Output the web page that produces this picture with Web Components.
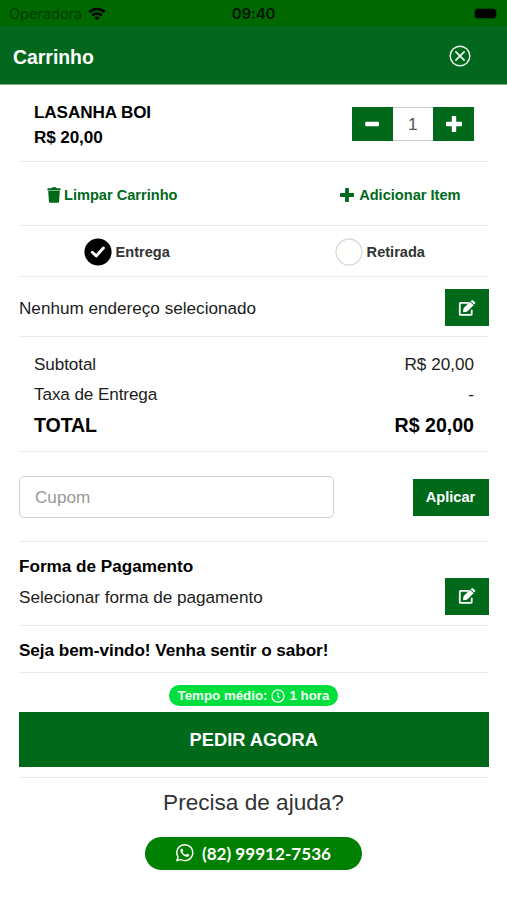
<!DOCTYPE html>
<html lang="pt-BR">
<head>
<meta charset="utf-8">
<title>Carrinho</title>
<style>
html,body{margin:0;padding:0;background:#fff}
body{font-family:"Liberation Sans",Arial,sans-serif;font-size:17.14px;color:#1c1c1c;--green:#00691a}
</style>
</head>
<body>
<cart-page></cart-page>
<script>
const define = (name, html) => {
  const t = document.createElement('template');
  t.innerHTML = html;
  customElements.define(name, class extends HTMLElement {
    constructor() {
      super();
      this.attachShadow({ mode: 'open' }).append(t.content.cloneNode(true));
    }
  });
};

const shapes = {
  wifi: ['0 0 18 14', '<path d="M1.3 5.2A11 11 0 0 1 16.7 5.2M4.2 8.3A7 7 0 0 1 13.8 8.3" fill="none" stroke="currentColor" stroke-width="2.5"/><path d="M6.4 10.4Q9 8.4 11.6 10.4L9 13.2Z"/>'],
  close: ['0 0 22 22', '<g fill="none" stroke="currentColor" stroke-width="1.5"><circle cx="11" cy="11" r="9.8"/><path d="M6.9 6.9l8.2 8.2M15.1 6.9l-8.2 8.2" stroke-width="1.8" stroke-linecap="round"/></g>'],
  minus: ['0 0 16 16', '<rect x="1.2" y="5.8" width="13.8" height="4.5" rx="1"/>'],
  plus: ['0 0 16 16', '<path d="M6.6 0h2.8q.8 0 .8.8v5h5q.8 0 .8.8v2.8q0 .8-.8.8h-5v5q0 .8-.8.8H6.6q-.8 0-.8-.8v-5h-5Q0 10.2 0 9.4V6.6q0-.8.8-.8h5v-5q0-.8.8-.8z"/>'],
  trash: ['0 0 14 16', '<path d="M.9 1.3h3.500L5 .2h4l.6 1.100h3.500q.5 0 .5.5v1.400H.4V1.800q0-.5.5-.5zM1.200 3.700h11.600l-.7 10.900q-.1 1.200-1.300 1.200H3.200Q2 15.800 1.900 14.600z"/>'],
  check: ['0 0 28 28', '<circle cx="14" cy="14" r="13.6"/><path d="M8.300 14.200l3.900 3.700 7.200-7.800" fill="none" stroke="#fff" stroke-width="2.900" stroke-linejoin="round" stroke-linecap="round"/>'],
  empty: ['0 0 28 28', '<circle cx="14" cy="14" r="13" fill="#fffffd" stroke="#d9d9d9" stroke-width="1.3"/>'],
  edit: ['0 0 18 16', '<path d="M10.800 2.900H2.400q-.6 0-.6.6v10.700q0 .6.6.6h10.700q.6 0 .6-.6V9.800" fill="none" stroke="currentColor" stroke-width="1.800"/><path d="M5 12.200l.5-4 6.600-6.400 3.500 3.500-6.600 6.400zM12.700 1.200l.7-.7q.9-.8 1.800 0l1.600 1.600q.9.900 0 1.800l-.7.700z"/>'],
  clock: ['0 0 14 14', '<circle cx="7" cy="7" r="6.1" fill="none" stroke="currentColor" stroke-width="1.3"/><path d="M6.900 3.200v4l2.300 1.700" fill="none" stroke="currentColor" stroke-width="1.3"/>'],
  whatsapp: ['0 32 448 448', '<path d="M380.900 97.100C339 55.100 283.200 32 223.900 32c-122.400 0-222 99.600-222 222 0 39.100 10.200 77.300 29.600 111L0 480l117.700-30.900c32.400 17.700 68.900 27 106.100 27h.1c122.300 0 224.100-99.600 224.100-222 0-59.300-25.200-115-67.100-157zm-157 341.600c-33.200 0-65.700-8.900-94-25.700l-6.700-4-69.800 18.300L72 359.200l-4.400-7c-18.500-29.400-28.200-63.300-28.200-98.200 0-101.700 82.800-184.500 184.600-184.500 49.300 0 95.600 19.200 130.400 54.100 34.800 34.900 56.200 81.200 56.100 130.500 0 101.800-84.900 184.600-186.600 184.600zm101.200-138.200c-5.500-2.800-32.800-16.200-37.900-18-5.100-1.900-8.800-2.800-12.500 2.800-3.700 5.600-14.300 18-17.600 21.800-3.200 3.700-6.500 4.200-12 1.400-32.600-16.300-54-29.100-75.500-66-5.700-9.800 5.700-9.100 16.300-30.300 1.800-3.700.9-6.900-.5-9.700-1.400-2.800-12.500-30.100-17.100-41.200-4.500-10.800-9.100-9.300-12.500-9.500-3.200-.2-6.900-.2-10.600-.2-3.700 0-9.700 1.400-14.800 6.900-5.100 5.600-19.400 19-19.400 46.300 0 27.300 19.900 53.700 22.600 57.400 2.800 3.700 39.100 59.700 94.800 83.800 35.200 15.200 49 16.500 66.600 13.900 10.700-1.600 32.800-13.400 37.400-26.400 4.600-13 4.600-24.100 3.200-26.400-1.300-2.500-5-3.900-10.500-6.600z"/>']
};
customElements.define('ui-icon', class extends HTMLElement {
  connectedCallback() {
    if (this.shadowRoot) return;
    const [box, body] = shapes[this.getAttribute('name')];
    this.attachShadow({ mode: 'open' }).innerHTML =
      `<style>:host{display:inline-flex;flex:none}svg{width:100%;height:100%;fill:currentColor}</style><svg viewBox="${box}">${body}</svg>`;
  }
});

define('status-bar', `<style>
:host{display:grid;grid-template-columns:1fr auto 1fr;align-items:center;height:26px;box-sizing:border-box;padding:1px 9px 0;background:#006800;font:14.5px Inter,sans-serif}
.l{display:flex;align-items:center;gap:6px;color:#003c00}
ui-icon{width:18px;height:14px;color:#000}
b{font-weight:600;font-size:15px;letter-spacing:-.1px;color:#001500}
.r{justify-self:end;width:21.5px;height:8.5px;background:#000;border:1.5px solid #004900;border-radius:4px;margin-right:1px}
</style><div class="l"><span>Operadora</span><ui-icon name="wifi"></ui-icon></div><b>09:40</b><div class="r"></div>`);

define('app-header', `<style>
:host{display:flex;align-items:center;justify-content:space-between;height:59px;box-sizing:border-box;padding:2px 36px 0 13px;background:#03681d;color:#fff;border-bottom:1px solid #7fb48c;font-weight:bold;font-size:19.4px}
span{padding-top:2px}
ui-icon{width:22px;height:22px;color:#e6f5e6}
</style><span><slot></slot></span><ui-icon name="close"></ui-icon>`);

define('cart-section', `<style>
:host{display:flex;align-items:center;justify-content:space-between;box-sizing:border-box;margin:0 18.5px 0 19px;border-bottom:1px solid #eaeaea}
</style><slot></slot>`);

define('green-button', `<style>
:host{display:flex;align-items:center;justify-content:center;background:var(--green);color:#fff;font-weight:bold;font-size:14.6px;width:76px;height:37px;flex:none}
:host([edit]){width:43.5px}
:host([big]){width:auto;height:55px;margin:0 18.5px 0 19px;font-size:18.3px}
</style><slot></slot>`);

define('qty-stepper', `<style>
:host{display:flex;height:34px;width:122.5px;color:#fff}
div{display:grid;place-items:center;width:41px;background:var(--green)}
.n{flex:1;box-sizing:border-box;background:#fff;color:#555;border:solid #ccc;border-width:1px 0}
ui-icon{width:16px;height:16px}
</style><div><ui-icon name="minus"></ui-icon></div><div class="n"><slot></slot></div><div><ui-icon name="plus"></ui-icon></div>`);

define('cart-link', `<style>
:host{display:flex;align-items:center;gap:3.5px;color:var(--green);font-weight:bold;font-size:14.6px}
</style><slot></slot>`);

define('delivery-option', `<style>
:host{display:flex;align-items:center;gap:3.5px;color:#333;font-weight:bold;font-size:14.6px}
::slotted(ui-icon){width:28px;height:28px;color:#000}
</style><slot></slot>`);

define('total-row', `<style>
:host{display:flex;justify-content:space-between;align-items:center;height:30px}
:host([strong]){font-weight:bold;font-size:19.59px;color:#000;height:33px}
[name=label]::slotted(*){letter-spacing:-.1px}
</style><slot name="label"></slot><slot></slot>`);

define('coupon-field', `<style>
:host{display:flex;align-items:center;width:315px;height:42px;box-sizing:border-box;padding-left:15px;border:1.5px solid #d0d0d0;border-radius:5px;color:#999}
</style><slot></slot>`);

define('time-badge', `<style>
:host{display:flex;align-items:center;justify-content:center;gap:4px;width:168.5px;height:21px;border-radius:11px;background:#00df3d;color:#f2fff2;font-weight:bold;font-size:13.3px}
ui-icon{width:14px;height:14px}
</style><slot name="label"></slot><ui-icon name="clock"></ui-icon><slot></slot>`);

define('phone-button', `<style>
:host{display:flex;align-items:center;justify-content:center;gap:8.5px;width:217px;height:33px;border-radius:17px;background:#008000;color:#fff;font:bold 17.1px Lato,sans-serif}
ui-icon{width:17.5px;height:17.5px}
span{padding-top:1px}
</style><ui-icon name="whatsapp"></ui-icon><span><slot></slot></span>`);

define('cart-page', `<style>
:host{display:flex;flex-direction:column;width:507px;height:900px;overflow:hidden;background:#fff}
b{color:#000}
.item{height:76.5px;padding:0 14.5px 0 15px}
.item div{display:grid;line-height:24.5px;padding-top:4px;letter-spacing:-.12px}
.item qty-stepper{margin-top:3px}
.links{height:64px;padding:3px 28px 0 27.5px}
.opts{height:51px;padding:3px 63.5px 0 65px}
.addr{height:60px;padding-top:3px}
.addr span{padding-top:1px}
.totals{height:115px;padding:4px 14.5px 0 15px;flex-direction:column;align-items:stretch;justify-content:center}
.coupon{height:90px;padding-top:2px}
.pay{height:84px}
.pay div{line-height:31px;padding-bottom:3px}
.pay green-button{margin-top:26px}
.msg{height:47.5px;padding-top:4px;letter-spacing:-.05px}
.foot{display:flex;flex-direction:column;align-items:center}
time-badge{margin-top:12px}
.foot green-button{align-self:stretch;margin-top:6px}
.foot cart-section{align-self:stretch;height:10.5px}
.help{font-size:22.6px;line-height:30px;color:#333;margin:10px 0 19px}
</style>
<status-bar></status-bar>
<app-header>Carrinho</app-header>
<cart-section class="item"><div><b>LASANHA BOI</b><b>R$ 20,00</b></div><qty-stepper>1</qty-stepper></cart-section>
<cart-section class="links"><cart-link><ui-icon name="trash" style="width:14px;height:16px"></ui-icon><span>Limpar Carrinho</span></cart-link><cart-link style="gap:5px"><ui-icon name="plus" style="width:14px;height:14px"></ui-icon><span>Adicionar Item</span></cart-link></cart-section>
<cart-section class="opts"><delivery-option><ui-icon name="check"></ui-icon><span>Entrega</span></delivery-option><delivery-option><ui-icon name="empty"></ui-icon><span>Retirada</span></delivery-option></cart-section>
<cart-section class="addr"><span>Nenhum endereço selecionado</span><green-button edit><ui-icon name="edit" style="width:18px;height:16px"></ui-icon></green-button></cart-section>
<cart-section class="totals"><total-row><span slot="label">Subtotal</span><span>R$ 20,00</span></total-row><total-row><span slot="label">Taxa de Entrega</span><span>-</span></total-row><total-row strong><span slot="label">TOTAL</span><span>R$ 20,00</span></total-row></cart-section>
<cart-section class="coupon"><coupon-field>Cupom</coupon-field><green-button>Aplicar</green-button></cart-section>
<cart-section class="pay"><div><b>Forma de Pagamento</b><br><span>Selecionar forma de pagamento</span></div><green-button edit><ui-icon name="edit" style="width:18px;height:16px"></ui-icon></green-button></cart-section>
<cart-section class="msg"><b>Seja bem-vindo! Venha sentir o sabor!</b></cart-section>
<div class="foot"><time-badge><span slot="label">Tempo médio:</span><span>1 hora</span></time-badge><green-button big>PEDIR AGORA</green-button><cart-section></cart-section><div class="help">Precisa de ajuda?</div><phone-button>(82) 99912-7536</phone-button></div>`);
</script>
</body>
</html>
